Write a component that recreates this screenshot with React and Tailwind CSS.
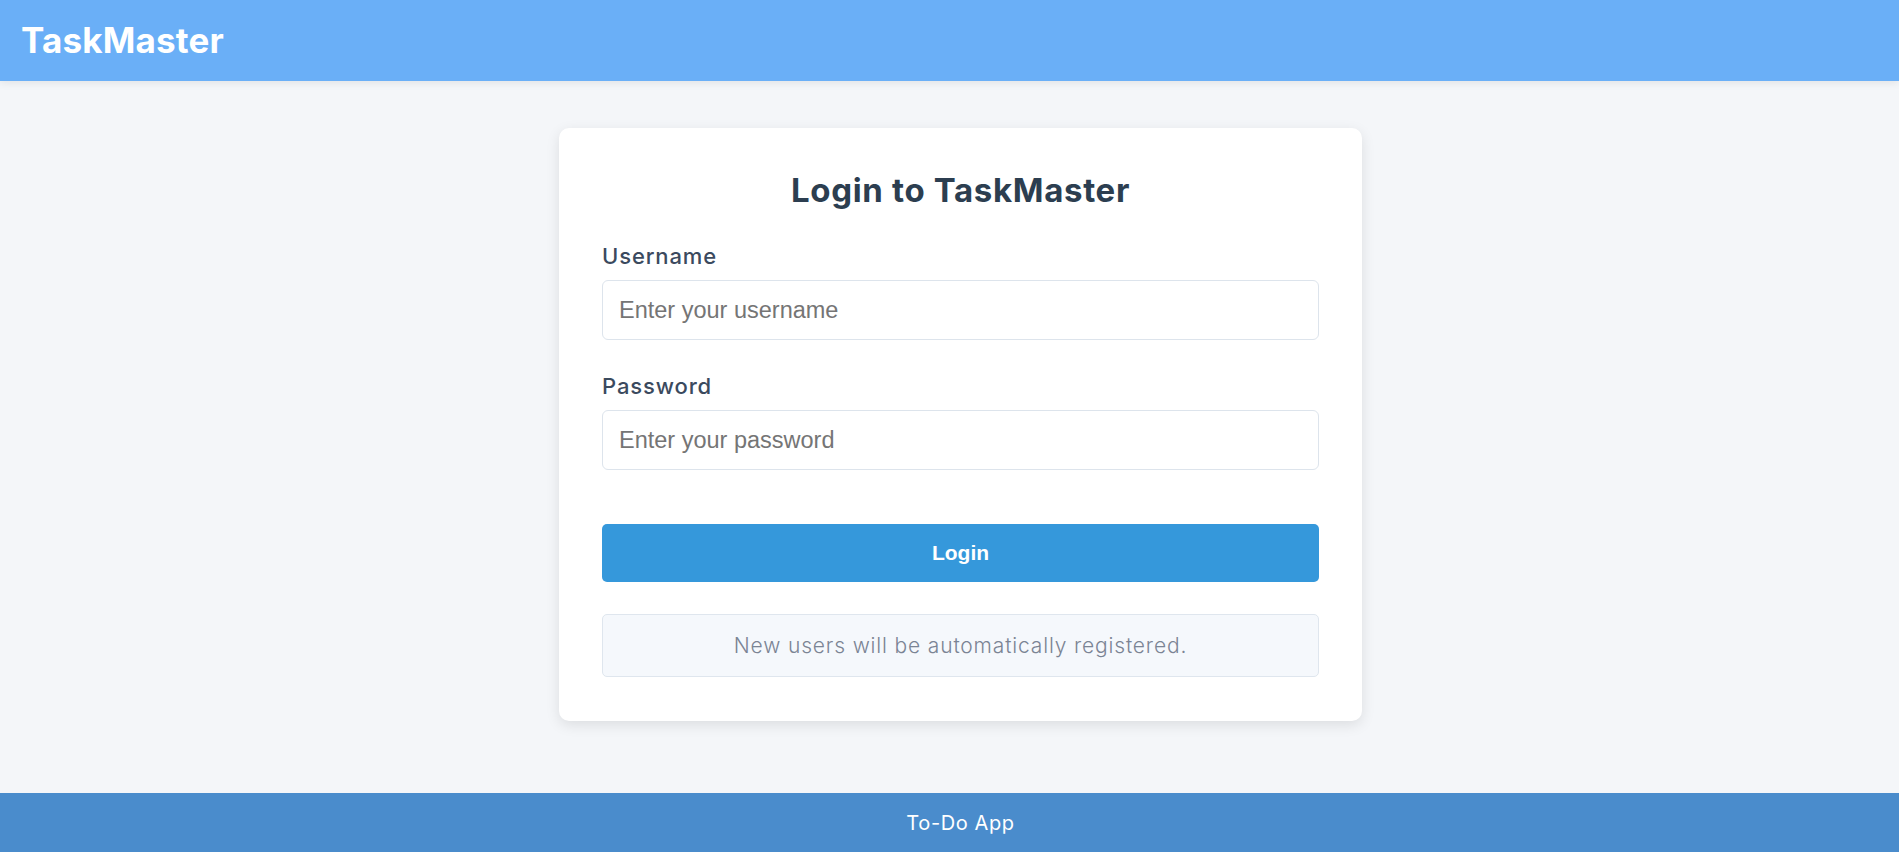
import React, { useState } from 'react';

export default function App() {
  const [username, setUsername] = useState('');
  const [password, setPassword] = useState('');

  const poppinsLike = { fontFamily: 'Inter, "Open Sans", sans-serif' };

  return (
    <div className="min-h-screen flex flex-col bg-[#f4f6f9]" style={poppinsLike}>
      {/* header */}
      <header className="h-[81px] bg-[#6aaff7] flex items-center px-[21px] shadow-[0_2px_8px_rgba(0,0,0,0.08)] relative z-10">
        <h1 className="text-[35px] leading-none font-bold text-white tracking-[0.005em]">TaskMaster</h1>
      </header>

      {/* main */}
      <main className="flex-1 flex justify-center pt-[47px] pl-[22px]">
        <div className="w-[803px] h-fit bg-white rounded-[10px] shadow-[0_4px_14px_rgba(0,0,0,0.10)] px-[43px] pt-[42px] pb-[44px]">
          <h2 className="text-[33px] leading-[40px] font-bold text-[#2c3e50] text-center tracking-[0.02em]">
            Login to TaskMaster
          </h2>

          <div className="mt-[32px]">
            <label className="block text-[22px] leading-[28px] font-medium text-[#3b4a5e] tracking-[0.04em]">Username</label>
            <input
              type="text"
              value={username}
              onChange={(e) => setUsername(e.target.value)}
              placeholder="Enter your username"
              className="mt-[10px] w-full h-[60px] px-4 rounded-[6px] border border-[#dde4ec] bg-white outline-none text-[23.5px] text-[#333] placeholder-[#757575]"
              style={{ fontFamily: '"Liberation Sans", Arial, sans-serif' }}
            />
          </div>

          <div className="mt-[32px]">
            <label className="block text-[22px] leading-[28px] font-medium text-[#3b4a5e] tracking-[0.04em]">Password</label>
            <input
              type="password"
              value={password}
              onChange={(e) => setPassword(e.target.value)}
              placeholder="Enter your password"
              className="mt-[10px] w-full h-[60px] px-4 rounded-[6px] border border-[#dde4ec] bg-white outline-none text-[23.5px] text-[#333] placeholder-[#757575]"
              style={{ fontFamily: '"Liberation Sans", Arial, sans-serif' }}
            />
          </div>

          <button
            className="mt-[54px] w-full h-[58px] rounded-[5px] bg-[#3598db] text-white text-[21px] font-bold hover:bg-[#2d89c6] transition-colors"
            style={{ fontFamily: '"Liberation Sans", Arial, sans-serif' }}
          >
            Login
          </button>

          <div className="mt-[32px] h-[63px] flex items-center justify-center rounded-[5px] border border-[#dfe6ee] bg-[#f5f8fc]">
            <p className="text-[21px] font-light text-[#7b8494] tracking-[0.04em]">New users will be automatically registered.</p>
          </div>
        </div>
      </main>

      {/* footer */}
      <footer className="h-[59px] mt-[70px] bg-[#4a8ccc] flex items-center justify-center pl-[22px]">
        <span className="text-[20px] text-white tracking-[0.03em]">To-Do App</span>
      </footer>
    </div>
  );
}
